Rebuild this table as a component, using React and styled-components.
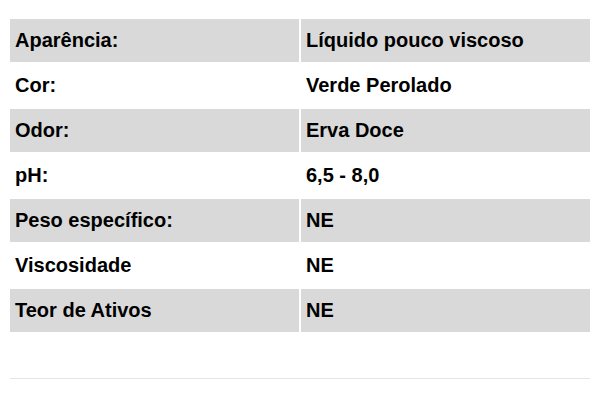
import React from "react";
import styled, { createGlobalStyle } from "styled-components";

const GlobalStyle = createGlobalStyle`
  body {
    margin: 0;
    background: #ffffff;
    font-family: "Liberation Sans", Arial, sans-serif;
  }
`;

const Page = styled.div`
  width: 600px;
  height: 400px;
  box-sizing: border-box;
  padding: 19px 10px 0 10px;
`;

const Table = styled.div`
  display: grid;
  grid-template-columns: 1fr 1fr;
  column-gap: 2px;
  row-gap: 2px;
`;

const Cell = styled.div`
  height: 43px;
  display: flex;
  align-items: center;
  padding-left: 5px;
  background: ${(p) => (p.shaded ? "#d9d9d9" : "#ffffff")};
  font-size: 20px;
  font-weight: 700;
  color: #000;
`;

const Divider = styled.div`
  height: 1px;
  background: #e4e4e4;
  margin-top: 46px;
`;

const rows = [
  ["Aparência:", "Líquido pouco viscoso"],
  ["Cor:", "Verde Perolado"],
  ["Odor:", "Erva Doce"],
  ["pH:", "6,5 - 8,0"],
  ["Peso específico:", "NE"],
  ["Viscosidade", "NE"],
  ["Teor de Ativos", "NE"],
];

const App = () => {
  return (
    <Page>
      <GlobalStyle />
      <Table>
        {rows.map(([label, value], i) => (
          <React.Fragment key={label}>
            <Cell shaded={i % 2 === 0}>{label}</Cell>
            <Cell shaded={i % 2 === 0}>{value}</Cell>
          </React.Fragment>
        ))}
      </Table>
      <Divider />
    </Page>
  );
};

export default App;
